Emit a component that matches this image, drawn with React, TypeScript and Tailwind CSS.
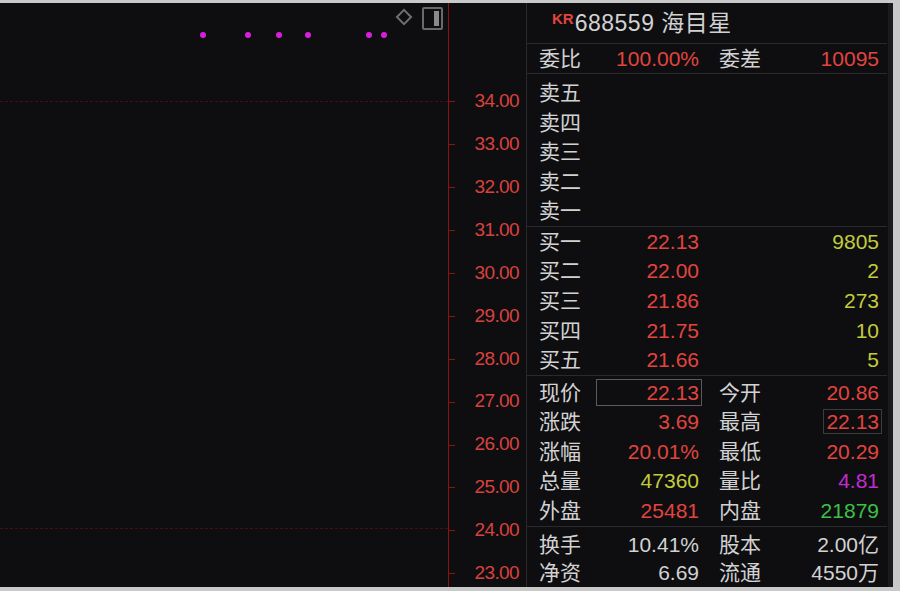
import React from 'react';

const axis = ['34.00', '33.00', '32.00', '31.00', '30.00', '29.00', '28.00', '27.00', '26.00', '25.00', '24.00', '23.00'];
const dots = [203, 248, 279, 308, 369, 384];

const sells = ['卖五', '卖四', '卖三', '卖二', '卖一'];
const buys = [
    { label: '买一', price: '22.13', vol: '9805' },
    { label: '买二', price: '22.00', vol: '2' },
    { label: '买三', price: '21.86', vol: '273' },
    { label: '买四', price: '21.75', vol: '10' },
    { label: '买五', price: '21.66', vol: '5' },
];

const RED = 'text-[#e2443e]';

function Row({ children, h = 'h-[29.6px]' }: { children: React.ReactNode; h?: string }) {
    return <div className={`grid grid-cols-[60px_100px_20px_60px_100px] items-center ${h}`}>{children}</div>;
}

export default function App() {
    return (
        <div
            className="w-[900px] h-[591px] bg-[#c9c9c9] pt-[3px] pb-[4px] pr-[7px] overflow-hidden"
            style={{ fontFamily: '"Liberation Sans", "Noto Sans CJK SC", sans-serif' }}
        >
            <div className="flex h-full bg-[#0e0e11] border-r-[5px] border-[#1b1b1d]">
                {/* chart canvas */}
                <div className="relative w-[449px] h-full border-r border-[#8a1414]">
                    {dots.map((x) => (
                        <div key={x} className="absolute w-[6px] h-[6px] rounded-full bg-[#d81fdc]" style={{ left: x - 3, top: 29 }} />
                    ))}
                    <div className="absolute left-0 right-0 top-[98px] border-t border-dashed border-[#4c0c12]" />
                    <div className="absolute left-0 right-0 top-[525px] border-t border-dashed border-[#4c0c12]" />
                    {/* toolbar icons */}
                    <div className="absolute left-[398px] top-[8px] w-[12px] h-[12px] rotate-45 border-2 border-[#6f6f6f]" />
                    <div className="absolute left-[422px] top-[4px] w-[21px] h-[23px] border-2 border-[#6a6a6a] rounded-[2px] flex justify-end p-[2px]">
                        <div className="w-[5px] h-full bg-[#8a8a8a]" />
                    </div>
                </div>

                {/* price axis */}
                <div className="w-[78px] h-full overflow-hidden pt-[77px] border-r border-[#2a2a2d]">
                    {axis.map((v) => (
                        <div key={v} className="relative h-[42.9px] flex items-center justify-end pr-[7px] text-[19px] text-[#d8423d] tracking-[-0.6px]">
                            <div className="absolute left-0 top-1/2 w-[6px] border-t border-[#8a1414]" />
                            {v}
                        </div>
                    ))}
                </div>

                {/* quote panel */}
                <div className="w-[360px] h-full flex flex-col text-[21px] text-[#d2d2d2] leading-none">
                    <div className="h-[43px] flex items-center pl-[25px] border-b border-[#2a2a2d]">
                        <span className="text-[15px] font-bold text-[#e2443e] -mt-[10px] mr-[1px]">KR</span>
                        <span className="text-[23px] tracking-[0.5px]">688559 海目星</span>
                    </div>
                    <div className="pl-[12px] border-b border-[#2a2a2d]">
                        <Row h="h-[29px]">
                            <span>委比</span>
                            <span className={`${RED} text-right`}>100.00%</span>
                            <span />
                            <span>委差</span>
                            <span className={`${RED} text-right`}>10095</span>
                        </Row>
                    </div>
                    <div className="pl-[12px] pt-[4px] border-b border-[#2a2a2d]">
                        {sells.map((s) => (
                            <Row key={s} h="h-[29.5px]">
                                <span>{s}</span>
                            </Row>
                        ))}
                    </div>
                    <div className="pl-[12px] border-b border-[#2a2a2d]">
                        {buys.map((b) => (
                            <Row key={b.label}>
                                <span>{b.label}</span>
                                <span className={`${RED} text-right`}>{b.price}</span>
                                <span />
                                <span />
                                <span className="text-right text-[#c3cb3b]">{b.vol}</span>
                            </Row>
                        ))}
                    </div>
                    <div className="pl-[12px] pt-[2px] pb-[1px] border-b border-[#2a2a2d]">
                        <Row h="h-[29.5px]">
                            <span>现价</span>
                            <span className={`${RED} text-right border border-[#5a5a5c] -ml-[3px] -mr-[3px] pr-[2px] h-[27px] flex items-center justify-end`}>22.13</span>
                            <span />
                            <span>今开</span>
                            <span className={`${RED} text-right`}>20.86</span>
                        </Row>
                        <Row h="h-[29.5px]">
                            <span>涨跌</span>
                            <span className={`${RED} text-right`}>3.69</span>
                            <span />
                            <span>最高</span>
                            <span className="flex justify-end">
                                <span className={`${RED} border border-[#3c3c3f] h-[25px] px-[2px] -mr-[3px] flex items-center`}>22.13</span>
                            </span>
                        </Row>
                        <Row h="h-[29.5px]">
                            <span>涨幅</span>
                            <span className={`${RED} text-right`}>20.01%</span>
                            <span />
                            <span>最低</span>
                            <span className={`${RED} text-right`}>20.29</span>
                        </Row>
                        <Row h="h-[29.5px]">
                            <span>总量</span>
                            <span className="text-right text-[#c3cb3b]">47360</span>
                            <span />
                            <span>量比</span>
                            <span className="text-right text-[#c22bd0]">4.81</span>
                        </Row>
                        <Row h="h-[29.5px]">
                            <span>外盘</span>
                            <span className={`${RED} text-right`}>25481</span>
                            <span />
                            <span>内盘</span>
                            <span className="text-right text-[#3cc046]">21879</span>
                        </Row>
                    </div>
                    <div className="pl-[12px] pt-[3px]">
                        <Row h="h-[28.5px]">
                            <span>换手</span>
                            <span className="text-right">10.41%</span>
                            <span />
                            <span>股本</span>
                            <span className="text-right">2.00亿</span>
                        </Row>
                        <Row h="h-[28.5px]">
                            <span>净资</span>
                            <span className="text-right">6.69</span>
                            <span />
                            <span>流通</span>
                            <span className="text-right">4550万</span>
                        </Row>
                    </div>
                </div>
            </div>
        </div>
    );
}
